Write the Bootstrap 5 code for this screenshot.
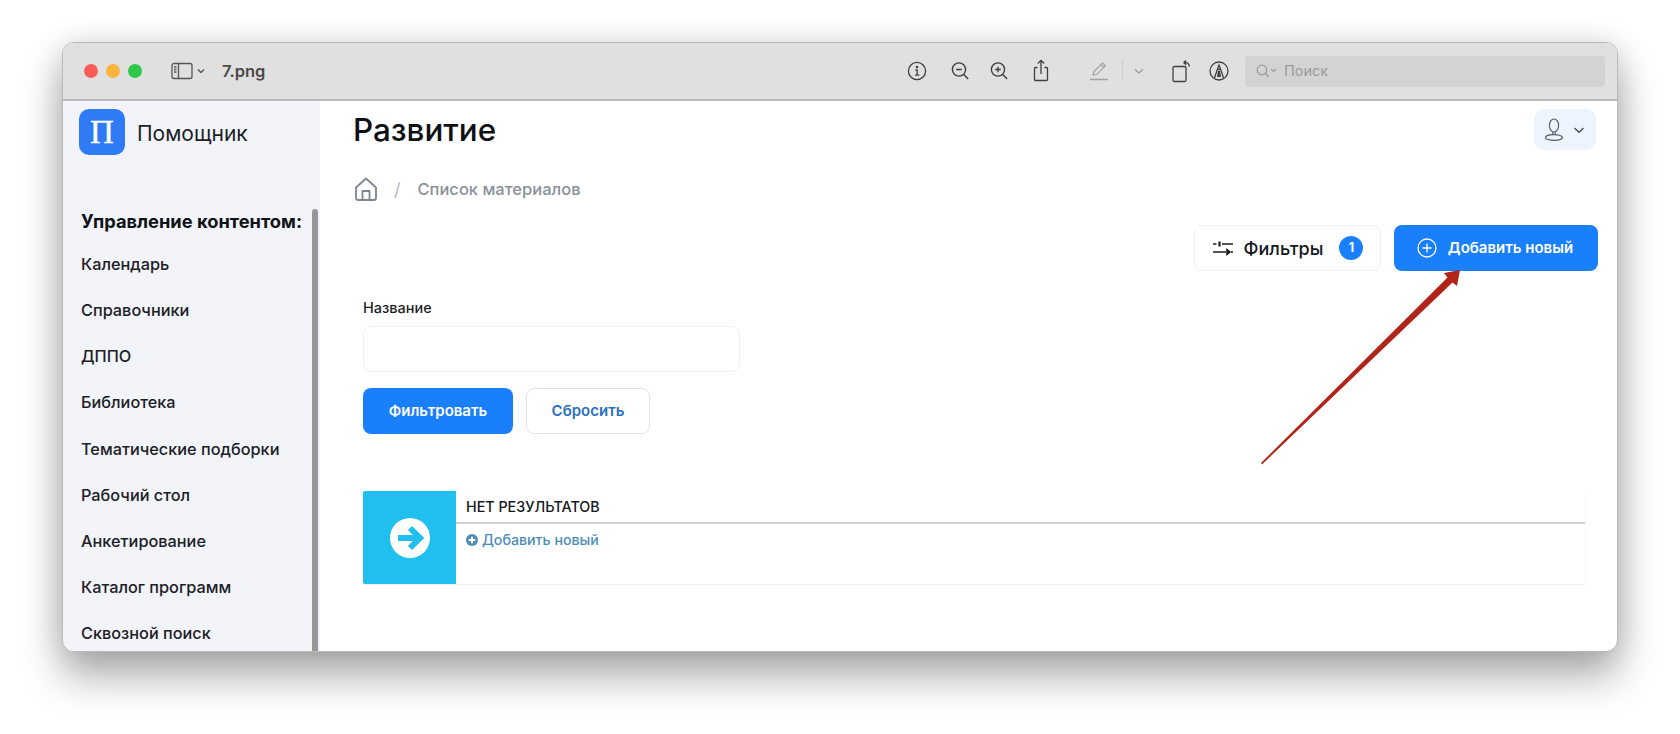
<!DOCTYPE html>
<html lang="ru">
<head>
<meta charset="utf-8">
<title>7.png</title>
<link href="https://cdn.jsdelivr.net/npm/bootstrap@5.3.0/dist/css/bootstrap.min.css" rel="stylesheet">
<style>
html,body{height:100%;background:#fff;overflow:hidden}
body{font-family:Inter,"Noto Sans",sans-serif;color:#14171c;padding:42px 62px 0}
.win{width:1556px;height:610px;border-radius:12px;border:1px solid #b9b9b9;box-shadow:0 24px 42px rgba(0,0,0,.33),0 0 30px rgba(0,0,0,.12);overflow:hidden;background:#fff;position:relative}
.tbar{height:58px;background:#e0e0e0;border-bottom:2px solid #b8b8b8;flex:none;padding-left:21px}
.tdot{width:14px;height:14px;border-radius:50%;margin-right:8px}
.tdot-r{background:#fb5c58}.tdot-y{background:#fdb43c}.tdot-g{background:#2ec84a}
.tside{margin-left:19px}
.tname{font-size:16.5px;font-weight:600;color:#4a4a4a;margin-left:13px;width:683px}
.tico{flex:none;display:block}
.tsearch{width:360px;height:31px;background:#d3d3d3;border-radius:4px;margin-left:14px;padding-left:11px;color:#9a9a9a;font-size:14.5px;gap:6px}
.side{width:257px;flex:none;background:#f2f4f9;position:relative;overflow:hidden;padding:8px 0 0 16px}
.logo{width:46px;height:46px;border-radius:10px;background:#2f7bf5;color:#fff;font-family:"Liberation Serif",serif;font-size:33px;line-height:46px;text-align:center;font-weight:400;-webkit-text-stroke:.5px #fff}
.lname{font-size:21px;margin-left:12px;color:#1c1f24;margin-top:3px}
.shead{font-size:18.3px;font-weight:700;margin:55px 0 0 2px;line-height:22px;color:#0f1216;white-space:nowrap}
.sitem{font-size:16.3px;font-weight:500;line-height:22px;margin:24.15px 0 0 2px;color:#1d2025;white-space:nowrap}
.sitem-first{margin-top:21px}
.sbar{position:absolute;right:2px;top:108px;bottom:0;width:6px;background:#979797;border-radius:3px 3px 0 0}
.mainp{padding:0 17px 0 33px;position:relative}
.ptitle{font-size:31.4px;font-weight:500;line-height:36px;margin:11px 0 0;color:#0d1014}
.ubtn{position:absolute;right:21px;top:8px;width:62px;height:41px;border-radius:10px;background:#edf4fd;border:0}
.crumbs{margin-top:28px;height:26px;color:#8b9099;font-size:16.5px;font-weight:500;gap:16px;padding-left:1px}
.crumbs .sep{color:#b3b7bd;font-weight:400;font-size:18px}
.crumbs .ctext{margin-left:1px}
.acts{margin-top:23px;gap:13px;padding-right:2px}
.bflt{height:46px;width:187px;background:#fff;border:1px solid #f0f1f4;border-radius:8px;font-size:18px;font-weight:500;color:#14171c;gap:10px;padding:0}
.bnum{width:24px;height:24px;border-radius:50%;background:#1a7ffb;color:#fff;font-size:12.5px;font-weight:700;margin-left:6px}
.badd{height:46px;width:204px;background:#1a7ffb;border:0;border-radius:8px;color:#fff;font-size:15px;font-weight:600;gap:11px;padding:0 2px 0 0}
.formz{margin:28px 0 0 10px}
.flabel{font-size:14.5px;font-weight:500;line-height:18px;margin-bottom:9px;color:#1c1f24}
.finput{width:377px;height:46px;border:1px solid #f0f1f4;border-radius:8px;box-shadow:none}
.frow{gap:13px;margin-top:16px}
.bgo{width:150px;height:46px;background:#1a7ffb;border:0;border-radius:8px;color:#fff;font-size:15px;font-weight:600;padding:0}
.brs{width:124px;height:46px;background:#fff;border:1px solid #dfe3ea;border-radius:8px;color:#2a70c0;font-size:15px;font-weight:600;padding:0}
.pnl{margin:57px 0 0 10px;width:1223px;height:94px;border-bottom:1px solid #eef0f2;border-right:1px solid #fafafa}
.pico{width:93px;flex:none;background:#20bfee;border-radius:2px 0 0 2px}
.phead{height:33px;padding:7px 0 0 10px;font-size:14.3px;font-weight:500;line-height:18px;border-bottom:2px solid #cfd1d3;color:#15181c}
.plink{padding:7px 0 0 10px;font-size:14.2px;font-weight:500;color:#4c8db5;line-height:18px;gap:4px}
.arrowz{position:absolute;left:-63px;top:-43px;width:1680px;height:734px;pointer-events:none}
</style>
</head>
<body>
<div class="win d-flex flex-column">
  <div class="tbar d-flex align-items-center">
    <span class="tdot tdot-r"></span><span class="tdot tdot-y"></span><span class="tdot tdot-g"></span>
    <svg class="tico tside" width="40" height="20" viewBox="0 0 40 20" fill="none" stroke="#555" stroke-width="1.3"><rect x="3" y="2.5" width="20" height="15" rx="2"/><path d="M9.5 2.5v15M5 6h2.5M5 8.5h2.5M5 11h2.5"/><path d="M29 8.500l3 3 3-3" stroke-width="1.4"/></svg>
    <span class="tname">7.png</span>
    <svg class="tico" width="24" height="24" viewBox="0 0 24 24" fill="none" stroke="#3f3f3f" stroke-width="1.3"><circle cx="12" cy="12" r="8.6"/><path d="M10.3 11h1.9v5M10 16.2h4.4"/><circle cx="12" cy="8" r=".7" fill="#3f3f3f"/></svg>
    <svg class="tico" style="margin-left:19px" width="24" height="24" viewBox="0 0 24 24" fill="none" stroke="#3f3f3f" stroke-width="1.4"><circle cx="11" cy="10.5" r="6.6"/><path d="M15.8 15.4l4.4 4.6M8.2 10.5h5.6"/></svg>
    <svg class="tico" style="margin-left:15px" width="24" height="24" viewBox="0 0 24 24" fill="none" stroke="#3f3f3f" stroke-width="1.4"><circle cx="11" cy="10.5" r="6.6"/><path d="M15.8 15.4l4.4 4.6M8.2 10.5h5.6M11 7.700v5.600"/></svg>
    <svg class="tico" style="margin-left:18px" width="24" height="26" viewBox="0 0 24 26" fill="none" stroke="#3f3f3f" stroke-width="1.3"><path d="M8.500 9.500H6.500a1 1 0 0 0-1 1v11a1 1 0 0 0 1 1h11a1 1 0 0 0 1-1v-11a1 1 0 0 0-1-1h-2M12 16V2.500M8.800 5.500L12 2.300l3.200 3.200"/></svg>
    <svg class="tico" style="margin-left:34px" width="24" height="24" viewBox="0 0 24 24" fill="none" stroke="#a0a0a0" stroke-width="1.2"><path d="M6 16l1-3.500L15.500 4l2.800 2.800L9.800 15.300zM14 5.500l2.800 2.800"/><path d="M3 20.500h18" stroke-width="1.700"/></svg>
    <span class="tico" style="width:1px;height:22px;background:#cfcfcf;margin-left:11px"></span>
    <svg class="tico" style="margin-left:10px" width="12" height="12" viewBox="0 0 12 12" fill="none" stroke="#9a9a9a" stroke-width="1.300"><path d="M2 4.500l4 3.500 4-3.500"/></svg>
    <svg class="tico" style="margin-left:24px" width="24" height="26" viewBox="0 0 24 26" fill="none" stroke="#3f3f3f" stroke-width="1.300"><rect x="4" y="8.500" width="13" height="15" rx="1.500"/><path d="M14.500 4.500c3-.8 5.500.8 6 4M14.500 4.500l2.700-2M14.500 4.500l2.700 2.200"/></svg>
    <svg class="tico" style="margin-left:14px" width="24" height="24" viewBox="0 0 24 24" fill="none" stroke="#3f3f3f" stroke-width="1.300"><circle cx="12" cy="12" r="9"/><path d="M7.500 19l3-9 1.500-4 1.500 4 3 9M10.500 10.500h3"/><path d="M11 12h2l1 6h-4z" fill="#3f3f3f" stroke="none"/></svg>
    <div class="tsearch d-flex align-items-center">
      <svg width="22" height="14" viewBox="0 0 22 14" fill="none" stroke="#9a9a9a" stroke-width="1.200"><circle cx="6" cy="6" r="4.800"/><path d="M9.500 9.500l3 3.500M15 5l2.500 2.500L20 5"/></svg>
      <span>Поиск</span>
    </div>
  </div>
  <div class="d-flex flex-grow-1" style="min-height:0">
    <aside class="side">
      <div class="d-flex align-items-center"><div class="logo">П</div><div class="lname">Помощник</div></div>
      <div class="shead">Управление контентом:</div>
      <div class="sitem sitem-first">Календарь</div>
      <div class="sitem">Справочники</div>
      <div class="sitem">ДППО</div>
      <div class="sitem">Библиотека</div>
      <div class="sitem">Тематические подборки</div>
      <div class="sitem">Рабочий стол</div>
      <div class="sitem">Анкетирование</div>
      <div class="sitem">Каталог программ</div>
      <div class="sitem">Сквозной поиск</div>
      <div class="sbar"></div>
    </aside>
    <main class="mainp flex-grow-1">
      <h1 class="ptitle">Развитие</h1>
      <button class="ubtn d-flex align-items-center justify-content-center gap-2" aria-label="Профиль">
        <svg width="20" height="24" viewBox="0 0 20 24" fill="none" stroke="#5a6068" stroke-width="1.200"><ellipse cx="10" cy="7.500" rx="4.600" ry="6.500"/><ellipse cx="10" cy="19.500" rx="8.500" ry="2.800"/><path d="M8.800 14v2.700M11.200 14v2.700"/></svg>
        <svg width="14" height="14" viewBox="0 0 14 14" fill="none" stroke="#4a5058" stroke-width="1.400"><path d="M2.500 5l4.500 4.200L11.500 5"/></svg>
      </button>
      <div class="crumbs d-flex align-items-center">
        <svg width="24" height="26" viewBox="0 0 24 26" fill="none" stroke="#7f858d" stroke-width="1.800"><path d="M2 11.500L12 2.500l10 9V22a2 2 0 0 1-2 2H4a2 2 0 0 1-2-2zM8.500 24v-9h7v9"/></svg>
        <span class="sep">/</span>
        <span class="ctext">Список материалов</span>
      </div>
      <div class="acts d-flex justify-content-end">
        <button class="bflt btn d-flex align-items-center justify-content-center">
          <svg width="22" height="18" viewBox="0 0 22 18" fill="none" stroke="#1a1d21" stroke-width="1.500"><path d="M1 5h3.500M10 5h11M1 13h13M19 13h2"/><path d="M7.500 2.500v5" stroke-width="2.200"/><path d="M15 10.500l3 2.500-3 2.500z" fill="#1a1d21"/></svg>
          <span>Фильтры</span>
          <span class="bnum d-flex align-items-center justify-content-center">1</span>
        </button>
        <button class="badd btn d-flex align-items-center justify-content-center">
          <svg width="20" height="20" viewBox="0 0 20 20" fill="none" stroke="#fff" stroke-width="1.300"><circle cx="10" cy="10" r="9"/><path d="M10 5.500v9M5.500 10h9"/></svg>
          <span>Добавить новый</span>
        </button>
      </div>
      <div class="formz">
        <div class="flabel">Название</div>
        <input class="form-control finput" type="text" aria-label="Название">
        <div class="frow d-flex">
          <button class="bgo btn">Фильтровать</button>
          <button class="brs btn">Сбросить</button>
        </div>
      </div>
      <div class="pnl d-flex">
        <div class="pico d-flex align-items-center justify-content-center">
          <svg width="40" height="40" viewBox="0 0 40 40"><circle cx="20" cy="20" r="20" fill="#fff"/><path d="M8 20h21M20 10l10 10-10 10" fill="none" stroke="#20bfee" stroke-width="6"/></svg>
        </div>
        <div class="flex-grow-1">
          <div class="phead">НЕТ РЕЗУЛЬТАТОВ</div>
          <div class="plink d-flex align-items-center">
            <svg width="12" height="12" viewBox="0 0 12 12"><circle cx="6" cy="6" r="6" fill="#4c8db5"/><path d="M6 2.700v6.600M2.700 6h6.600" stroke="#fff" stroke-width="2"/></svg>
            <span>Добавить новый</span>
          </div>
        </div>
      </div>
    </main>
  </div>
  <svg class="arrowz" viewBox="0 0 1680 734"><path d="M1261 463L1262 464.500 1452.500 282.500 1457 286 1460 270 1444 273 1447.500 277.500z" fill="#b0241a"/></svg>
</div>
</body>
</html>
